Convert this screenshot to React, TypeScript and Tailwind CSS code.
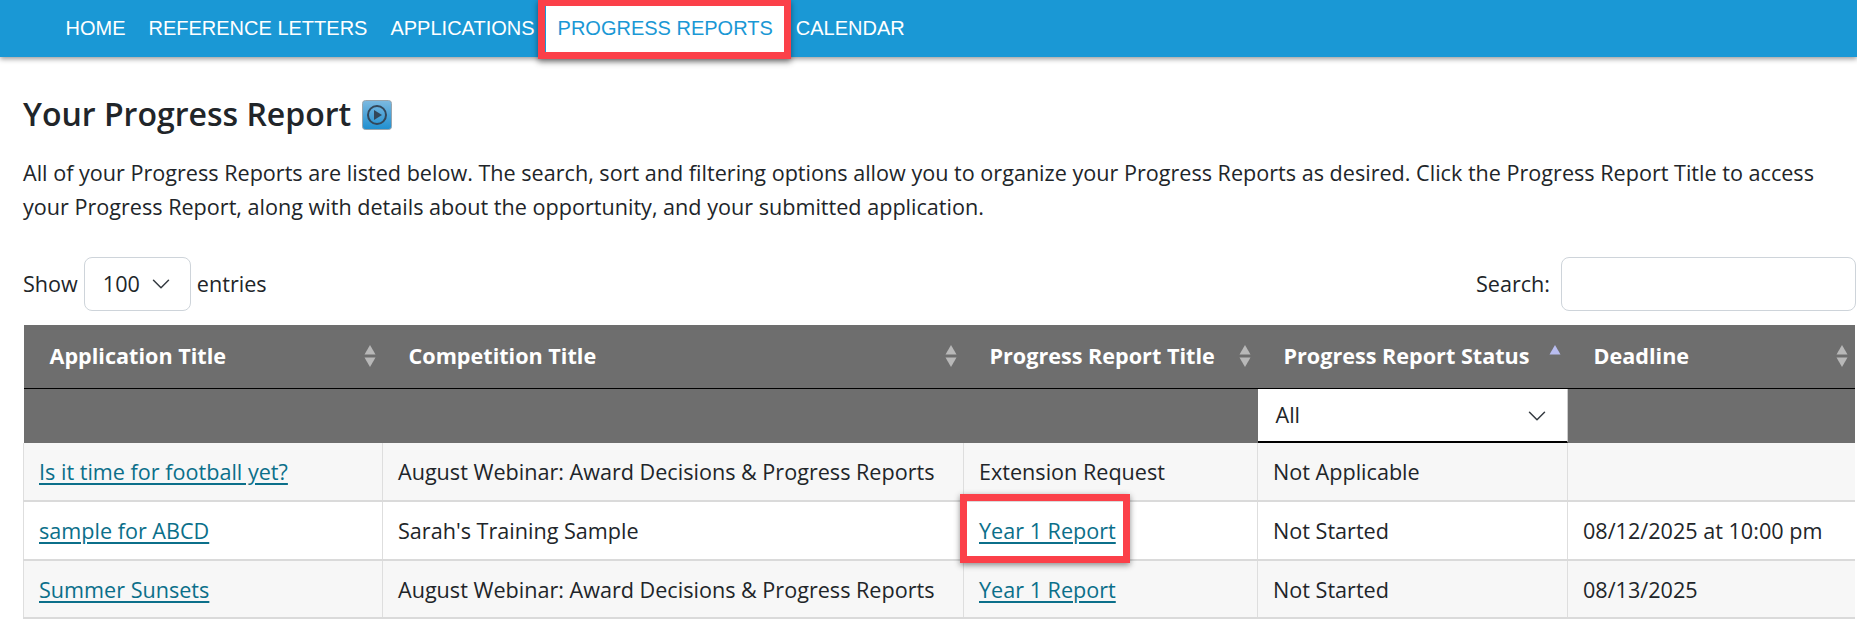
import React from "react";
import { ChevronDown } from "lucide-react";

const navItems = ["HOME", "REFERENCE LETTERS", "APPLICATIONS", "PROGRESS REPORTS", "CALENDAR"];

function SortIcon({ up = false }: { up?: boolean }) {
  return (
    <svg width="12" height="22" viewBox="0 0 12 22" className="shrink-0">
      <path d="M6 0 L11.5 9.5 L0.5 9.5 Z" fill={up ? "#b9bdf0" : "#b8b8b8"} />
      {!up && <path d="M0.5 12.5 L11.5 12.5 L6 22 Z" fill="#b8b8b8" />}
    </svg>
  );
}

function HeadCell({ title, up = false }: { title: string; up?: boolean }) {
  return (
    <th className="h-[63px] pl-[26px] pr-[7px] text-left align-middle border-b border-black">
      <div className="flex items-center justify-between">
        <span className="whitespace-nowrap text-[21.6px] font-bold text-white">{title}</span>
        <SortIcon up={up} />
      </div>
    </th>
  );
}

function Cell({ children, striped }: { children?: React.ReactNode; striped?: boolean }) {
  return (
    <td className={`h-[58.6px] px-[15px] pt-[2px] whitespace-nowrap border-l border-[#dedede] border-b-2 border-b-[#dadada] ${striped ? "bg-[#f7f7f7]" : "bg-white"}`}>
      {children}
    </td>
  );
}

function TableLink({ children }: { children: React.ReactNode }) {
  return <a className="text-[#0b6f8a] underline decoration-[1.5px] underline-offset-[3px]">{children}</a>;
}

export default function App() {
  return (
    <div className="h-[621px] overflow-hidden bg-white text-[#212529] font-['Open_Sans',sans-serif] text-[21.6px]">
      <nav className="flex h-[57px] items-start bg-[#1a98d5] pl-[54px] shadow-[0_2px_5px_rgba(0,0,0,0.4)] font-['Liberation_Sans',sans-serif] text-[20px] text-white">
        {navItems.map((item) =>
          item === "PROGRESS REPORTS" ? (
            <div key={item} className="relative flex h-[52px] items-start bg-white px-[11.5px] pt-[17px] text-[#1a98d5] leading-[22px]">
              {item}
              <div className="absolute -left-[8px] -right-[7px] -top-[1px] -bottom-[7px] border-[7px] border-[#fb4049] shadow-[0_3px_6px_rgba(0,0,0,0.45)]" />
            </div>
          ) : (
            <div key={item} className="px-[11.5px] pt-[17px] leading-[22px]">{item}</div>
          )
        )}
      </nav>

      <main className="pl-[23px]">
        <div className="mt-[37px] flex items-center gap-[11px]">
          <h1 className="text-[32px] font-semibold leading-[40px]">Your Progress Report</h1>
          <svg width="30" height="30" viewBox="0 0 30 30" className="mt-[1px]">
            <defs>
              <linearGradient id="playBg" x1="0" y1="0" x2="0" y2="1">
                <stop offset="0" stopColor="#7db9e0" />
                <stop offset="1" stopColor="#1f8fd0" />
              </linearGradient>
            </defs>
            <rect x="0.5" y="0.5" width="29" height="29" rx="3" fill="url(#playBg)" stroke="#9aa6ae" />
            <circle cx="15" cy="15" r="9" fill="none" stroke="#33475a" strokeWidth="2" />
            <path d="M12 10 L20 15 L12 20 Z" fill="#33475a" />
          </svg>
        </div>

        <p className="mt-[22px] leading-[34px] whitespace-nowrap">
          All of your Progress Reports are listed below. The search, sort and filtering options allow you to organize your Progress Reports as desired. Click the Progress Report Title to access
          <br />
          your Progress Report, along with details about the opportunity, and your submitted application.
        </p>

        <div className="mt-[33px] flex h-[54px] items-center justify-between pr-[1px]">
          <div className="flex items-center gap-[6px]">
            <span>Show</span>
            <div className="flex h-[54px] w-[107px] items-center justify-between rounded-[8px] border border-[#ced4da] pl-[18px] pr-[14px]">
              100
              <ChevronDown size={30} strokeWidth={1.2} className="text-[#343a40]" />
            </div>
            <span>entries</span>
          </div>
          <div className="flex items-center gap-[11px]">
            <span>Search:</span>
            <div className="h-[54px] w-[295px] rounded-[8px] border border-[#ced4da]" />
          </div>
        </div>

        <table className="mt-[14px] w-[1831px] table-fixed border-collapse">
          <colgroup>
            <col className="w-[359px]" />
            <col className="w-[581px]" />
            <col className="w-[294px]" />
            <col className="w-[310px]" />
            <col className="w-[287px]" />
          </colgroup>
          <thead>
            <tr className="bg-[#6e6e6e]">
              <HeadCell title="Application Title" />
              <HeadCell title="Competition Title" />
              <HeadCell title="Progress Report Title" />
              <HeadCell title="Progress Report Status" up />
              <HeadCell title="Deadline" />
            </tr>
            <tr className="bg-[#6e6e6e]">
              <th className="h-[54px]" />
              <th />
              <th />
              <th className="p-0 font-normal">
                <div className="flex h-[54px] items-center justify-between border-r border-r-[#cccccc] border-b-2 border-b-black bg-white pb-[1px] pl-[18px] pr-[15px] pt-[3px] text-left">
                  All
                  <ChevronDown size={30} strokeWidth={1.2} className="text-[#343a40]" />
                </div>
              </th>
              <th />
            </tr>
          </thead>
          <tbody>
            <tr>
              <Cell striped><TableLink>Is it time for football yet?</TableLink></Cell>
              <Cell striped>August Webinar: Award Decisions &amp; Progress Reports</Cell>
              <Cell striped>Extension Request</Cell>
              <Cell striped>Not Applicable</Cell>
              <Cell striped />
            </tr>
            <tr>
              <Cell><TableLink>sample for ABCD</TableLink></Cell>
              <Cell>Sarah's Training Sample</Cell>
              <td className="relative h-[58.6px] border-l border-[#dedede] border-b-2 border-b-[#dadada] bg-white px-[15px] pt-[2px] whitespace-nowrap">
                <TableLink>Year 1 Report</TableLink>
                <div className="absolute left-[-4px] top-[-8px] h-[69px] w-[170px] border-[7px] border-[#fb4049] shadow-[0_2px_6px_rgba(0,0,0,0.45)]" />
              </td>
              <Cell>Not Started</Cell>
              <Cell>08/12/2025 at 10:00 pm</Cell>
            </tr>
            <tr>
              <Cell striped><TableLink>Summer Sunsets</TableLink></Cell>
              <Cell striped>August Webinar: Award Decisions &amp; Progress Reports</Cell>
              <Cell striped><TableLink>Year 1 Report</TableLink></Cell>
              <Cell striped>Not Started</Cell>
              <Cell striped>08/13/2025</Cell>
            </tr>
          </tbody>
        </table>
      </main>
    </div>
  );
}
